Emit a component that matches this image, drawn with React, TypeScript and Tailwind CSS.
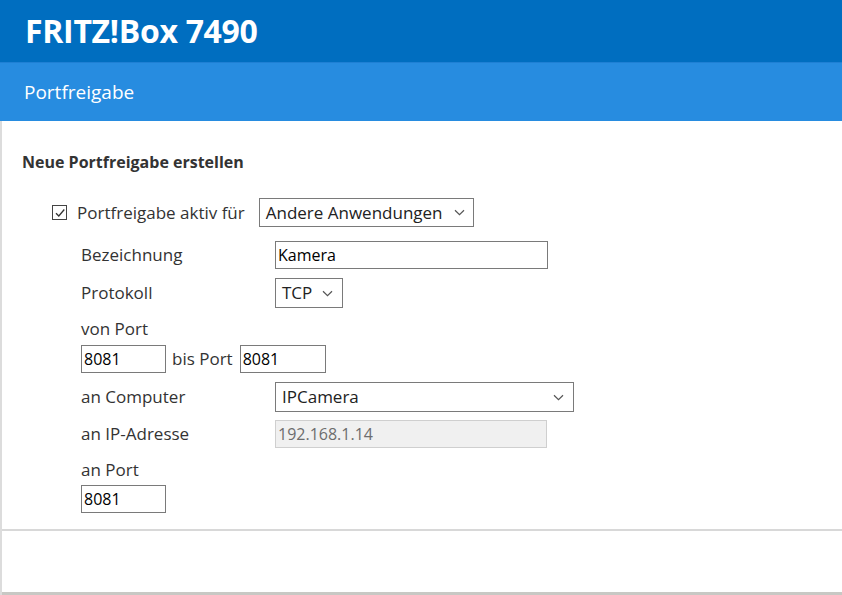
import React from "react";

const font = { fontFamily: '"Open Sans", "Noto Sans", sans-serif' };

function Chevron({ className = "" }: { className?: string }) {
  return (
    <svg width="11" height="7" viewBox="0 0 11 7" className={className}>
      <path d="M1 1.2 L5.5 5.6 L10 1.2" fill="none" stroke="#555" strokeWidth="1.2" />
    </svg>
  );
}

function TextBox({ value, w, disabled = false }: { value: string; w: string; disabled?: boolean }) {
  return (
    <div
      className={
        "flex items-center pl-[2px] h-[28px] text-[16px] " +
        w +
        (disabled
          ? " bg-[#f0f0f0] border border-[#cfcfcf] text-[#6d6d6d]"
          : " bg-white border border-[#7a7a7a] text-black")
      }
    >
      {value}
    </div>
  );
}

function Select({ value, w }: { value: string; w: string }) {
  return (
    <div
      className={
        "flex items-center justify-between h-[30px] pl-[6px] pr-[9px] border border-[#7a7a7a] bg-white text-[17px] text-[#222] " +
        w
      }
    >
      <span>{value}</span>
      <Chevron />
    </div>
  );
}

function Label({ children }: { children: React.ReactNode }) {
  return <div className="w-[194px] text-[17px] text-[#333] leading-[20px]">{children}</div>;
}

export default function App() {
  return (
    <div className="w-[842px] h-[595px] flex flex-col bg-white overflow-hidden" style={font}>
      <div className="h-[62px] bg-[#006ec0] flex items-center pl-[25px]">
        <span className="text-white text-[32px] font-bold tracking-[-0.3px] leading-none">FRITZ!Box 7490</span>
      </div>
      <div className="h-[59px] bg-[#278ce0] border-t border-[#1f80d4] flex items-center pl-[24px]">
        <span className="text-white text-[19px] leading-none">Portfreigabe</span>
      </div>
      <div className="flex-1 flex flex-col border-l-2 border-[#dcdcdc]">
        <div className="pl-[20px] pt-[31px]">
          <div className="text-[16px] font-bold text-[#333] leading-[20px]">Neue Portfreigabe erstellen</div>
          <div className="mt-[26px] ml-[30px] flex items-center h-[29px]">
            <div className="w-[15px] h-[15px] border border-[#444] flex items-center justify-center">
              <svg width="12" height="12" viewBox="0 0 12 12">
                <path d="M2 6.2 L4.8 9 L10.3 2.5" fill="none" stroke="#333" strokeWidth="1.3" />
              </svg>
            </div>
            <span className="ml-[10px] text-[17px] text-[#333]">Portfreigabe aktiv für</span>
            <div className="ml-[14px] flex items-center justify-between h-[29px] w-[215px] pl-[6px] pr-[8px] border border-[#7a7a7a] text-[17px] text-[#222]">
              <span>Andere Anwendungen</span>
              <Chevron />
            </div>
          </div>
          <div className="ml-[59px]">
            <div className="mt-[14px] flex items-center">
              <Label>Bezeichnung</Label>
              <TextBox value="Kamera" w="w-[273px]" />
            </div>
            <div className="mt-[9px] flex items-center">
              <Label>Protokoll</Label>
              <Select value="TCP" w="w-[68px]" />
            </div>
            <div className="mt-[11px]">
              <Label>von Port</Label>
            </div>
            <div className="mt-[6px] flex items-center">
              <TextBox value="8081" w="w-[85px]" />
              <span className="ml-[6px] mr-[7px] text-[17px] text-[#333]">bis Port</span>
              <TextBox value="8081" w="w-[86px]" />
            </div>
            <div className="mt-[9px] flex items-center">
              <Label>an Computer</Label>
              <Select value="IPCamera" w="w-[299px]" />
            </div>
            <div className="mt-[8px] flex items-center">
              <Label>an IP-Adresse</Label>
              <TextBox value="192.168.1.14" w="w-[272px]" disabled />
            </div>
            <div className="mt-[12px]">
              <Label>an Port</Label>
            </div>
            <div className="mt-[5px] flex">
              <TextBox value="8081" w="w-[85px]" />
            </div>
          </div>
        </div>
        <div className="mt-[16px] h-[2px] bg-[#d8d8d8]" />
        <div className="flex-1 border-b-[3px] border-[#c8c8c4]" />
      </div>
    </div>
  );
}
